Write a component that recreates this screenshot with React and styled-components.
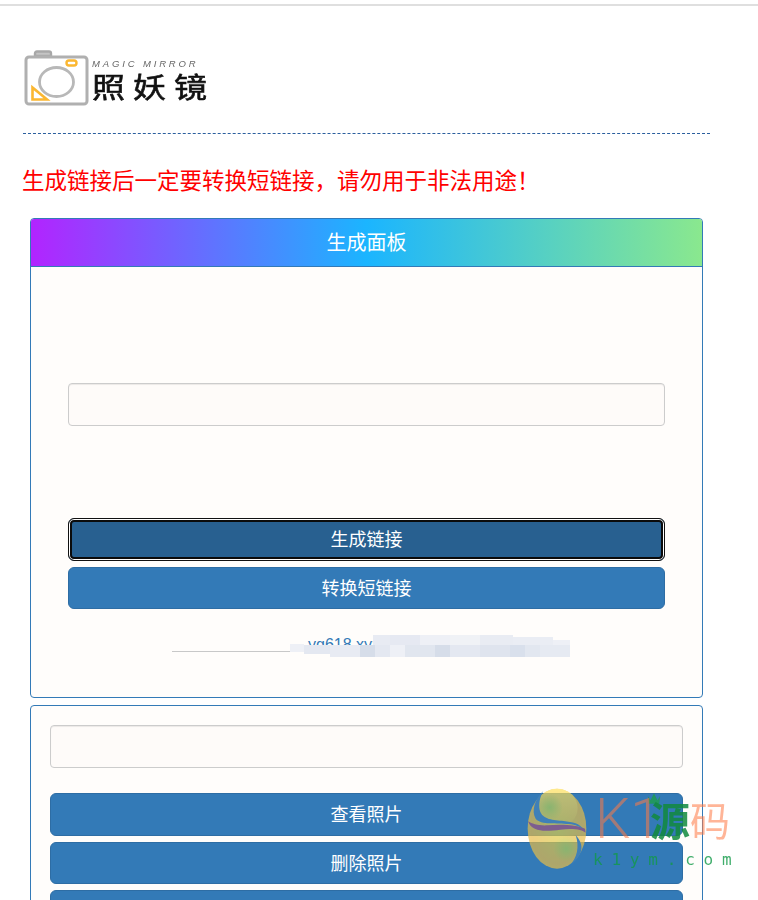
import React from 'react';
import styled, { createGlobalStyle } from 'styled-components';

const GlobalStyle = createGlobalStyle`
  html, body {
    margin: 0;
    padding: 0;
    height: 900px;
    overflow: hidden;
    background: #fff;
    font-family: "Liberation Sans", "Noto Sans CJK SC", sans-serif;
  }
  * { box-sizing: border-box; }
`;

const Page = styled.div`
  position: relative;
  width: 758px;
  height: 900px;
  overflow: hidden;
  padding-top: 4px;
`;

const TopRule = styled.div`
  height: 2px;
  background: #dfdfdf;
`;

const Header = styled.header`
  width: 687px;
  margin: 44px 0 0 23px;
  padding-bottom: 27px;
  border-bottom: 1px dashed #2b5f9e;
`;

const Logo = styled.div`
  display: flex;
  align-items: flex-start;
  gap: 2px;
  height: 56px;
  filter: blur(0.4px);
`;

const LogoText = styled.div`
  display: flex;
  flex-direction: column;
  padding-top: 8px;
`;

const LogoLatin = styled.span`
  font-size: 9.5px;
  line-height: 11px;
  font-style: italic;
  letter-spacing: 2.85px;
  color: #666;
  white-space: nowrap;
`;

const LogoName = styled.span`
  display: block;
  font-family: "Noto Sans CJK SC", sans-serif;
  font-size: 33px;
  line-height: 36px;
  margin-top: 1px;
  letter-spacing: 8px;
  color: #111;
  -webkit-text-stroke: 0.7px #111;
  white-space: nowrap;
  transform: scaleY(0.86);
  transform-origin: left top;
`;

const Warning = styled.h2`
  margin: 30px 0 0 22px;
  font-family: "Noto Sans CJK SC", sans-serif;
  font-weight: 400;
  font-size: 22.5px;
  line-height: 30px;
  color: #ff0000;
  white-space: nowrap;
`;

const Panel = styled.section`
  width: 673px;
  margin: ${(p) => p.$top}px 0 0 30px;
  border: 1px solid #337ab7;
  border-radius: 4px;
  background: #fffdfb;
  overflow: hidden;
`;

const PanelHeading = styled.div`
  height: 48px;
  border-bottom: 1px solid #337ab7;
  background: linear-gradient(90deg, #b224ff 0%, #1bb5ff 50%, #8ae88e 100%);
  color: #fff;
  font-family: "Noto Sans CJK SC", sans-serif;
  font-size: 20px;
  line-height: 46px;
  text-align: center;
`;

const PanelBody = styled.div`
  padding: ${(p) => p.$pad};
`;

const TextInput = styled.input`
  display: block;
  width: 100%;
  height: 43px;
  border: 1px solid #ccc;
  border-radius: 4px;
  background: #fefbf9;
  box-shadow: inset 0 1px 1px rgba(0, 0, 0, 0.075);
  outline: none;
`;

const Button = styled.button`
  display: block;
  width: 100%;
  height: 42.5px;
  margin-top: ${(p) => p.$top}px;
  padding: 0 0 2px;
  border: 1px solid #2e6da4;
  border-radius: 6px;
  background: #337ab7;
  color: #fff;
  font-family: "Noto Sans CJK SC", sans-serif;
  font-size: 18px;
  line-height: 36px;
  text-align: center;
`;

const ActiveButton = styled(Button)`
  border: 1px solid #111;
  background: #286090;
  box-shadow: inset 0 0 0 1px #fff, inset 0 0 0 3px #0b0b0b;
`;

const ResultRow = styled.div`
  position: relative;
  height: 23px;
  margin-top: 25px;
  font-size: 16px;
  line-height: 22px;
  color: #337ab7;
  overflow: hidden;
`;

const ResultLine = styled.span`
  position: absolute;
  left: 104px;
  top: 17px;
  width: 120px;
  height: 1px;
  background: #c8c8c8;
`;

const ResultLink = styled.a`
  position: absolute;
  left: 240px;
  top: 0;
  white-space: nowrap;
  color: #337ab7;
`;

const Mosaic = styled.svg`
  position: absolute;
  left: 222px;
  top: 0;
`;

const Watermark = styled.div`
  position: absolute;
  left: 527px;
  top: 788px;
  width: 225px;
  height: 90px;
  display: flex;
  gap: 6px;
  pointer-events: none;

  > svg:first-child {
    flex: none;
  }
`;

const WatermarkText = styled.div`
  position: relative;
  padding-top: 2px;
`;

const BrandRow = styled.div`
  display: flex;
  align-items: center;
  height: 58px;
`;

const BrandLatin = styled.span`
  font-family: Roboto, "Liberation Sans", sans-serif;
  font-weight: 300;
  font-size: 56px;
  line-height: 58px;
  width: 57px;
  padding-left: 2px;
  color: #ff7a45;
  opacity: 0.55;
`;

const BrandHan = styled.span`
  font-family: "Noto Sans CJK SC", sans-serif;
  font-weight: ${(p) => p.$weight};
  font-size: 40px;
  line-height: 58px;
  color: ${(p) => p.$color};
  opacity: ${(p) => p.$alpha};
`;

const Crown = styled.svg`
  position: absolute;
  left: 54px;
  top: 3px;
  opacity: 0.8;
`;

const Domain = styled.div`
  margin-top: 3px;
  font-family: "DejaVu Sans Mono", "Liberation Mono", monospace;
  font-size: 16px;
  line-height: 18px;
  letter-spacing: 8.8px;
  color: #129a48;
  opacity: 0.8;
  white-space: nowrap;
`;

const mosaicCells = [
  [0, 10, 14, 8, '#eef0f6'], [14, 11, 26, 9, '#e4e8f1'],
  [83, 1, 17, 10, '#e8ebf3'], [100, 1, 30, 10, '#e6e9f2'], [130, 1, 30, 10, '#eef0f6'], [160, 1, 30, 10, '#f0f2f6'],
  [190, 1, 33, 10, '#e9ecf3'], [223, 3, 40, 8, '#eaedf4'], [263, 6, 17, 5, '#eef0f6'],
  [40, 11, 30, 12, '#e8ebf3'], [70, 11, 15, 12, '#d6dde9'], [85, 11, 15, 12, '#e4e8f1'], [100, 11, 15, 12, '#eef0f6'],
  [115, 11, 30, 12, '#e1e6ef'], [145, 11, 15, 12, '#d6dde9'], [160, 11, 30, 12, '#e4e8f1'], [190, 11, 30, 12, '#dfe4ee'],
  [220, 11, 15, 12, '#d9e0ec'], [235, 11, 15, 12, '#e2e7f0'], [250, 11, 30, 12, '#e6eaf2'],
];

const SwirlLogo = () => (
  <svg width="60" height="82" viewBox="0 0 180 246">
    <defs>
      <radialGradient id="ball" cx="0.5" cy="0.5" r="0.62">
        <stop offset="0" stopColor="#dcd048" />
        <stop offset="0.7" stopColor="#e8bc48" />
        <stop offset="1" stopColor="#f4c640" />
      </radialGradient>
      <radialGradient id="blob">
        <stop offset="0" stopColor="#b2d050" />
        <stop offset="1" stopColor="#b2d050" stopOpacity="0" />
      </radialGradient>
      <linearGradient id="crest" x1="0" y1="0" x2="0" y2="1">
        <stop offset="0" stopColor="#ffe25a" />
        <stop offset="1" stopColor="#ffe25a" stopOpacity="0" />
      </linearGradient>
    </defs>
    <g opacity="0.68">
      <ellipse cx="90" cy="122" rx="88" ry="120" fill="url(#ball)" />
      <ellipse cx="90" cy="60" rx="62" ry="58" fill="url(#crest)" />
      <circle cx="68" cy="58" r="40" fill="url(#blob)" />
      <circle cx="118" cy="182" r="40" fill="url(#blob)" />
      <path d="M3 100 C15 135 60 130 100 125 C140 120 165 125 176 134 L174 122 C150 110 100 108 60 112 C35 113 15 108 3 100 Z" fill="#a0507f" />
    </g>
    <path d="M48 10 C24 32 12 70 26 92 C42 112 90 104 125 108 C146 110 160 116 168 124 C160 106 136 102 110 99 C80 96 46 96 38 66 C34 46 40 26 48 10 Z" fill="#3f80b8" />
    <path d="M128 232 C150 212 158 176 146 142 C162 158 168 178 160 196 C152 212 142 224 128 232 Z" fill="#3f80b8" />
  </svg>
);

const CameraLogo = () => (
  <svg width="67" height="56" viewBox="0 0 67 56">
    <path d="M12 6 V3.5 Q12 1.5 14 1.5 H26 Q28 1.5 28 3.5 V6 Z" fill="#c4c4c4" stroke="#a8a8a8" strokeWidth="2.4" />
    <rect x="3" y="7" width="61" height="47" rx="3" fill="#fff" stroke="#b0b0b0" strokeWidth="3" />
    <rect x="43.5" y="10.5" width="10" height="5" rx="2.5" fill="#fff" stroke="#fbb731" strokeWidth="2.4" />
    <ellipse cx="33.5" cy="32" rx="17" ry="14.5" fill="none" stroke="#b8b8b8" strokeWidth="2.8" />
    <path d="M9.5 37.5 V49.5 H24 Z" fill="#fff" stroke="#fbb731" strokeWidth="2.6" />
  </svg>
);

export default function App() {
  return (
    <Page>
      <GlobalStyle />
      <TopRule />
      <Header>
        <Logo>
          <CameraLogo />
          <LogoText>
            <LogoLatin>MAGIC MIRROR</LogoLatin>
            <LogoName>照妖镜</LogoName>
          </LogoText>
        </Logo>
      </Header>
      <Warning>生成链接后一定要转换短链接，请勿用于非法用途！</Warning>

      <Panel $top={24}>
        <PanelHeading>生成面板</PanelHeading>
        <PanelBody $pad="116px 37px 40px">
          <TextInput />
          <ActiveButton $top={92}>生成链接</ActiveButton>
          <Button $top={6}>转换短链接</Button>
          <ResultRow>
            <ResultLine />
            <ResultLink>yg618.xyz</ResultLink>
            <Mosaic width="280" height="23" viewBox="0 0 280 23">
              {mosaicCells.map(([x, y, w, h, fill]) => (
                <rect key={`${x}-${y}`} x={x} y={y} width={w} height={h} fill={fill} />
              ))}
            </Mosaic>
          </ResultRow>
        </PanelBody>
      </Panel>

      <Panel $top={7}>
        <PanelBody $pad="19px 19px 20px">
          <TextInput />
          <Button $top={25}>查看照片</Button>
          <Button $top={6}>删除照片</Button>
          <Button $top={6} />
        </PanelBody>
      </Panel>

      <Watermark>
        <SwirlLogo />
        <WatermarkText>
          <Crown width="14" height="15" viewBox="0 0 16 14">
            <path d="M1 4 L4 9 L8 1 L12 9 L15 4 L14 13 H2 Z" fill="#1f9d4d" />
          </Crown>
          <BrandRow>
            <BrandLatin>K1</BrandLatin>
            <BrandHan $color="#118a3e" $weight={700} $alpha={0.85}>源</BrandHan>
            <BrandHan $color="#ff7a45" $weight={400} $alpha={0.55}>码</BrandHan>
          </BrandRow>
          <Domain>k1ym.com</Domain>
        </WatermarkText>
      </Watermark>
    </Page>
  );
}
